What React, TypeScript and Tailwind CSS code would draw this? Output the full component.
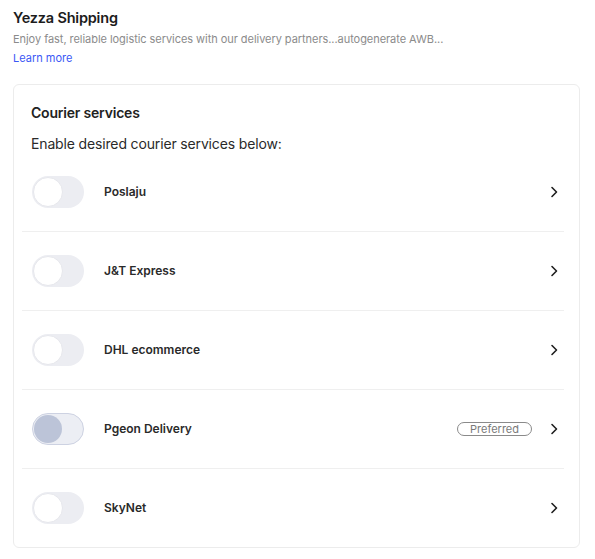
import React from "react";

type Courier = { name: string; active?: boolean; preferred?: boolean };

const couriers: Courier[] = [
  { name: "Poslaju" },
  { name: "J&T Express" },
  { name: "DHL ecommerce" },
  { name: "Pgeon Delivery", active: true, preferred: true },
  { name: "SkyNet" },
];

function Toggle({ active }: { active?: boolean }) {
  return active ? (
    <div className="relative h-[32px] w-[52px] shrink-0 rounded-full border border-[#cdd2e2] bg-[#eceef4]">
      <div className="absolute left-[1px] top-[1px] h-[28px] w-[28px] rounded-full bg-[#bcc4d8]" />
    </div>
  ) : (
    <div className="relative h-[32px] w-[52px] shrink-0 rounded-full bg-[#ecedf2]">
      <div className="absolute left-[1px] top-[1px] h-[30px] w-[30px] rounded-full border border-[#e6e7ec] bg-white" />
    </div>
  );
}

function Chevron() {
  return (
    <svg width="10" height="12" viewBox="0 0 10 12" fill="none">
      <path d="M3 1.5 L7.5 6 L3 10.5" stroke="#1f1f1f" strokeWidth="1.6" strokeLinecap="round" strokeLinejoin="round" />
    </svg>
  );
}

export default function App() {
  return (
    <div className="w-[595px] h-[559px] bg-white px-[13px] pt-[9px]" style={{ fontFamily: "Inter, 'Noto Sans', sans-serif" }}>
      <div className="text-[14.5px] font-semibold leading-[18px] text-[#1c1c1c] tracking-[-0.2px]">Yezza Shipping</div>
      <div className="mt-[5px] text-[11px] leading-[14px] text-[#8b8b8b] tracking-[-0.05px]">
        Enjoy fast, reliable logistic services with our delivery partners...autogenerate AWB...
      </div>
      <div className="mt-[5px] text-[11px] leading-[14px] text-[#3b57f5]">Learn more</div>

      <div className="mt-[19px] w-[567px] rounded-[6px] border border-[#ececec]">
        <div className="px-[17px] pt-[19px]">
          <div className="text-[14px] font-semibold leading-[18px] text-[#222] tracking-[-0.2px]">Courier services</div>
          <div className="mt-[13px] text-[14px] leading-[18px] text-[#2a2a2a] tracking-[-0.15px]">Enable desired courier services below:</div>
        </div>
        <div className="ml-[8px] mr-[15px] flex flex-col">
          {couriers.map((c, i) => (
            <div
              key={c.name}
              className={`flex items-center pl-[10px] pr-[5px] ${i > 0 ? "h-[79px] border-t border-[#efefef]" : "h-[78px]"}`}
            >
              <Toggle active={c.active} />
              <div className="ml-[20px] flex-1 text-[12px] font-semibold text-[#2a2a2a]">{c.name}</div>
              {c.preferred && (
                <div className="mr-[17px] flex h-[14px] items-center rounded-full border border-[#8a8a8a] px-[12px] text-[11px] leading-none text-[#7a7a7a]">
                  Preferred
                </div>
              )}
              <Chevron />
            </div>
          ))}
        </div>
      </div>
    </div>
  );
}
